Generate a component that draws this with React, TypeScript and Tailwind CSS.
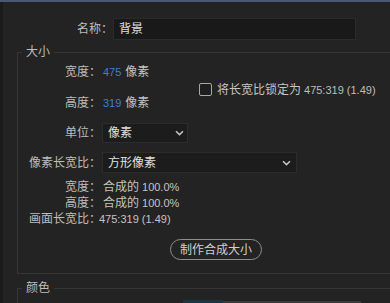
import React from "react";

const Chevron = () => (
  <svg width="9" height="6" viewBox="0 0 9 6" className="block">
    <path d="M1 1.2 L4.5 4.6 L8 1.2" fill="none" stroke="#c4c4c4" strokeWidth="1.5" />
  </svg>
);

export default function App() {
  return (
    <div
      className="w-[390px] h-[303px] bg-[#232323] overflow-hidden flex flex-col text-[12px] leading-[16px] text-[#c4c4c4]"
      style={{ fontFamily: '"Liberation Sans", "Noto Sans CJK SC", sans-serif' }}
    >
      <div className="h-[2px] flex-none bg-[#4a5874]" />
      <div className="flex-1 flex flex-col border-l-[3px] border-[#1b1b1b]">
        {/* name row */}
        <div className="flex items-center mt-[16px] h-[22px] flex-none">
          <div className="w-[110px] text-right text-[#bdbdbd]">名称：</div>
          <div className="w-[243px] h-[22px] bg-[#191919] border border-[#2b2b2b] flex items-center pl-[5px] text-[#e0e0e0]">
            背景
          </div>
        </div>

        {/* size group */}
        <fieldset className="mt-[4px] ml-[14px] w-[400px] h-[230px] flex-none border border-[#363636] border-r-0">
          <legend className="ml-[4px] px-[4px] text-[#bdbdbd]">大小</legend>

          <div className="flex items-center mt-[4px]">
            <div className="w-[181px] flex flex-col gap-[15px]">
              <div className="flex items-center h-[16px]">
                <div className="w-[83px] text-right text-[#bdbdbd]">宽度：</div>
                <span className="ml-[2px] text-[11px] text-[#3f7fd6]">475</span>
                <span className="ml-[4px]">像素</span>
              </div>
              <div className="flex items-center h-[16px]">
                <div className="w-[83px] text-right text-[#bdbdbd]">高度：</div>
                <span className="ml-[2px] text-[11px] text-[#3f7fd6]">319</span>
                <span className="ml-[4px]">像素</span>
              </div>
            </div>
            <div className="flex items-center mt-[4px]">
              <div className="w-[13px] h-[13px] border-[1.5px] border-[#a8a8a8] rounded-[2px] bg-[#1e1e1e]" />
              <span className="ml-[5px]">将长宽比锁定为</span>
              <span className="ml-[3px] text-[11px] text-[#bdbdbd]">475:319 (1.49)</span>
            </div>
          </div>

          <div className="flex items-center mt-[12px]">
            <div className="w-[83px] text-right text-[#bdbdbd]">单位：</div>
            <div className="ml-[1px] w-[86px] h-[20px] bg-[#1c1c1c] border border-[#2c2c2c] flex items-center justify-between pl-[5px] pr-[3px] text-[#e0e0e0]">
              <span>像素</span>
              <Chevron />
            </div>
          </div>

          <div className="flex items-center mt-[9px]">
            <div className="w-[83px] text-right text-[#bdbdbd]">像素长宽比：</div>
            <div className="ml-[1px] w-[195px] h-[21px] bg-[#1c1c1c] border border-[#2c2c2c] flex items-center justify-between pl-[5px] pr-[5px] text-[#e0e0e0]">
              <span>方形像素</span>
              <Chevron />
            </div>
          </div>

          <div className="flex flex-col mt-[6px]">
            <div className="flex items-center h-[16px]">
              <div className="w-[83px] text-right text-[#bdbdbd]">宽度：</div>
              <span className="ml-[2px]">合成的</span>
              <span className="ml-[3px] text-[11px]">100.0%</span>
            </div>
            <div className="flex items-center h-[16px]">
              <div className="w-[83px] text-right text-[#bdbdbd]">高度：</div>
              <span className="ml-[2px]">合成的</span>
              <span className="ml-[3px] text-[11px]">100.0%</span>
            </div>
            <div className="flex items-center h-[16px]">
              <div className="w-[83px] text-right text-[#bdbdbd]">画面长宽比：</div>
              <span className="ml-[-2px] text-[11px]">475:319 (1.49)</span>
            </div>
          </div>

          <div className="flex mt-[12px] ml-[152px]">
            <div className="w-[92px] h-[21px] rounded-full border-[1.5px] border-[#8e8e8e] flex items-center justify-center text-[#d0d0d0]">
              制作合成大小
            </div>
          </div>
        </fieldset>

        {/* color group */}
        <fieldset className="mt-[6px] ml-[14px] w-[400px] h-[40px] flex-none border border-[#363636] border-r-0 border-b-0">
          <legend className="ml-[4px] px-[4px] text-[#bdbdbd]">颜色</legend>
          <div className="flex items-end mt-[4px] ml-[165px]">
            <div className="w-[40px] h-[6px] bg-[#1d3443]" />
            <div className="w-[138px] h-[5px] bg-[#3b3b3b]" />
          </div>
        </fieldset>
      </div>
    </div>
  );
}
